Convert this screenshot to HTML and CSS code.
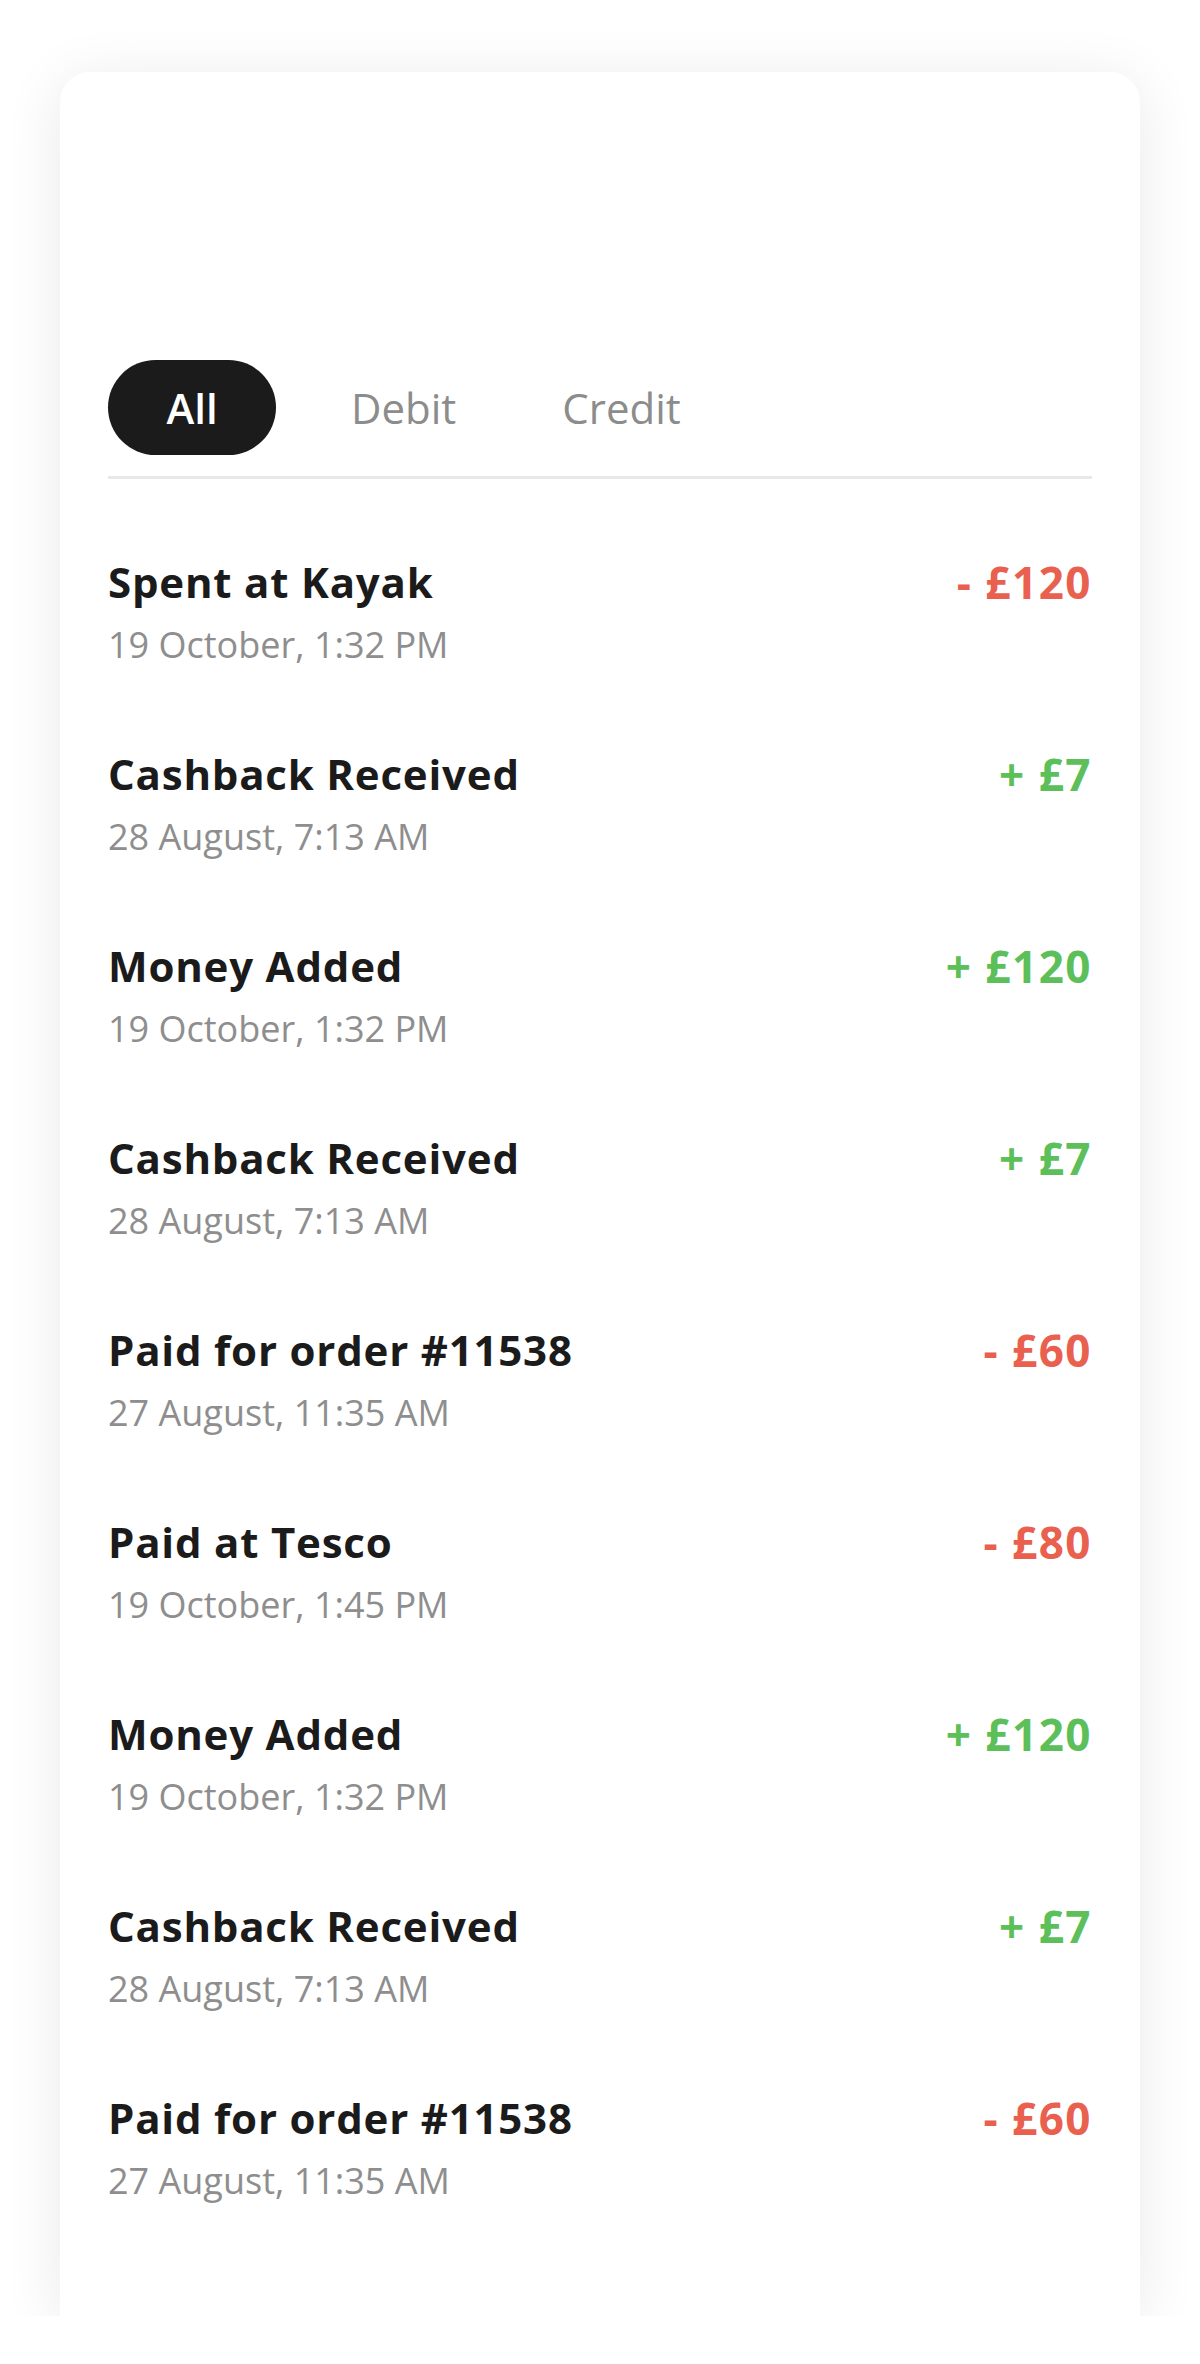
FILE: index.html
```html
<!DOCTYPE html>
<html lang="en">
<head>
<meta charset="utf-8">
<title>Transactions</title>
<link rel="stylesheet" href="styles.css">
</head>
<body>
<div class="card">
  <div class="tabs">
    <div class="tab tab-active">All</div>
    <div class="tab tab-debit">Debit</div>
    <div class="tab tab-credit">Credit</div>
  </div>
  <ul class="list">
    <li class="row"><div class="info"><div class="title">Spent at Kayak</div><div class="date">19 October, 1:32 PM</div></div><div class="amount debit">- £120</div></li>
    <li class="row"><div class="info"><div class="title">Cashback Received</div><div class="date">28 August, 7:13 AM</div></div><div class="amount credit">+ £7</div></li>
    <li class="row"><div class="info"><div class="title">Money Added</div><div class="date">19 October, 1:32 PM</div></div><div class="amount credit">+ £120</div></li>
    <li class="row"><div class="info"><div class="title">Cashback Received</div><div class="date">28 August, 7:13 AM</div></div><div class="amount credit">+ £7</div></li>
    <li class="row"><div class="info"><div class="title">Paid for order #11538</div><div class="date">27 August, 11:35 AM</div></div><div class="amount debit">- £60</div></li>
    <li class="row"><div class="info"><div class="title">Paid at Tesco</div><div class="date">19 October, 1:45 PM</div></div><div class="amount debit">- £80</div></li>
    <li class="row"><div class="info"><div class="title">Money Added</div><div class="date">19 October, 1:32 PM</div></div><div class="amount credit">+ £120</div></li>
    <li class="row"><div class="info"><div class="title">Cashback Received</div><div class="date">28 August, 7:13 AM</div></div><div class="amount credit">+ £7</div></li>
    <li class="row"><div class="info"><div class="title">Paid for order #11538</div><div class="date">27 August, 11:35 AM</div></div><div class="amount debit">- £60</div></li>
  </ul>
</div>
</body>
</html>
```

FILE: styles.css
```css
* { box-sizing: border-box; }
html, body { margin: 0; padding: 0; background: #ffffff; }
body { font-family: "Open Sans", "Noto Sans", sans-serif; color: #1b1b1b; }

.card {
  margin: 72px 60px 0;
  width: 1080px;
  height: 2244px;
  background: #ffffff;
  border-radius: 30px 30px 0 0;
  box-shadow: 0 8px 60px rgba(0, 0, 0, 0.09);
  padding: 288px 48px 0;
}

.tabs {
  display: flex;
  align-items: center;
  padding-bottom: 21px;
  border-bottom: 3px solid #e8e8e8;
}

.tab {
  font-size: 42px;
  font-weight: 500;
  color: #8c8c8c;
  line-height: 95px;
}

.tab-active {
  width: 168px;
  height: 95px;
  border-radius: 48px;
  background: #1b1b1b;
  color: #ffffff;
  text-align: center;
  font-weight: 600;
}

.tab-debit { margin-left: 75px; }
.tab-credit { margin-left: 106px; }

.list {
  list-style: none;
  margin: 75px 0 0;
  padding: 0;
  display: flex;
  flex-direction: column;
  gap: 73px;
}

.row {
  display: flex;
  justify-content: space-between;
  align-items: flex-start;
}

.title {
  font-size: 42px;
  font-weight: 700;
  line-height: 56px;
  letter-spacing: 0.8px;
  color: #1b1b1b;
}

.date {
  margin-top: 7px;
  font-size: 36px;
  line-height: 56px;
  color: #8e8e8e;
}

.amount {
  font-size: 44px;
  font-weight: 700;
  line-height: 56px;
  letter-spacing: 1.5px;
}

.debit { color: #e9604f; }
.credit { color: #5cbf5a; }
```
